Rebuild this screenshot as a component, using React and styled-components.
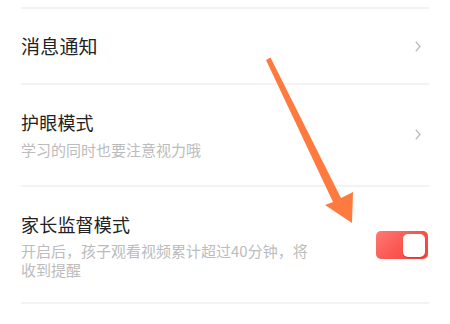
import React from "react";
import styled, { createGlobalStyle } from "styled-components";

const Global = createGlobalStyle`
  html, body { margin: 0; padding: 0; background: #ffffff; }
  body { font-family: "Noto Sans CJK SC", "Noto Sans", sans-serif; }
`;

const Page = styled.div`
  position: relative;
  width: 450px;
  height: 324px;
  overflow: hidden;
  background: #fff;
  padding-top: 7px;
  box-sizing: border-box;
`;

const List = styled.div`
  margin: 0 21px;
  border-top: 2px solid #f3f3f3;
`;

const Row = styled.div`
  display: flex;
  align-items: center;
  justify-content: space-between;
  padding: ${(p) => p.$pad || "24px 0"};
  border-bottom: 2px solid #f3f3f3;
`;

const TextBlock = styled.div`
  display: flex;
  flex-direction: column;
  gap: ${(p) => p.$gap || 5}px;
  max-width: 296px;
`;

const Title = styled.div`
  font-size: ${(p) => p.$size || 18}px;
  line-height: 26px;
  color: #222;
  letter-spacing: 0.2px;
`;

const Sub = styled.div`
  font-size: 15px;
  line-height: ${(p) => p.$lh || 20}px;
  color: #bcbcbc;
`;

const Chevron = styled.svg`
  width: 6px;
  height: 11px;
  margin-right: 8px;
  flex: none;
`;

const Switch = styled.div`
  width: 52px;
  height: 28px;
  border-radius: 5px;
  background: linear-gradient(135deg, #ff7a74 0%, #fb5651 50%, #f3413e 100%);
  box-sizing: border-box;
  padding: 3px;
  display: flex;
  justify-content: flex-end;
  align-items: center;
  flex: none;
  margin-right: 1px;
`;

const Knob = styled.div`
  width: 22px;
  height: 23px;
  border-radius: 5px;
  background: #fff;
  box-shadow: 0 1px 1px rgba(150, 20, 20, 0.35);
`;

const ArrowLayer = styled.svg`
  position: absolute;
  left: 0;
  top: 0;
  width: 450px;
  height: 324px;
  pointer-events: none;
`;

const ChevronIcon = () => (
  <Chevron viewBox="0 0 6 11">
    <path d="M0.8 0.8 L5 5.5 L0.8 10.2" fill="none" stroke="#bbbbbb" strokeWidth="1.3" />
  </Chevron>
);

export default function App() {
  return (
    <>
      <Global />
      <Page>
        <List>
          <Row>
            <Title $size={19}>消息通知</Title>
            <ChevronIcon />
          </Row>
          <Row $pad="24px 0 25px">
            <TextBlock>
              <Title>护眼模式</Title>
              <Sub>学习的同时也要注意视力哦</Sub>
            </TextBlock>
            <ChevronIcon />
          </Row>
          <Row $pad="24px 0 23px">
            <TextBlock $gap={4}>
              <Title>家长监督模式</Title>
              <Sub $lh={19}>开启后，孩子观看视频累计超过40分钟，将收到提醒</Sub>
            </TextBlock>
            <Switch>
              <Knob />
            </Switch>
          </Row>
        </List>
        <ArrowLayer viewBox="0 0 450 324">
          <polygon
            points="266,60 270.5,57.5 341,198 353,192 352,223 325,205 333,202"
            fill="#ff7a3e"
          />
        </ArrowLayer>
      </Page>
    </>
  );
}
